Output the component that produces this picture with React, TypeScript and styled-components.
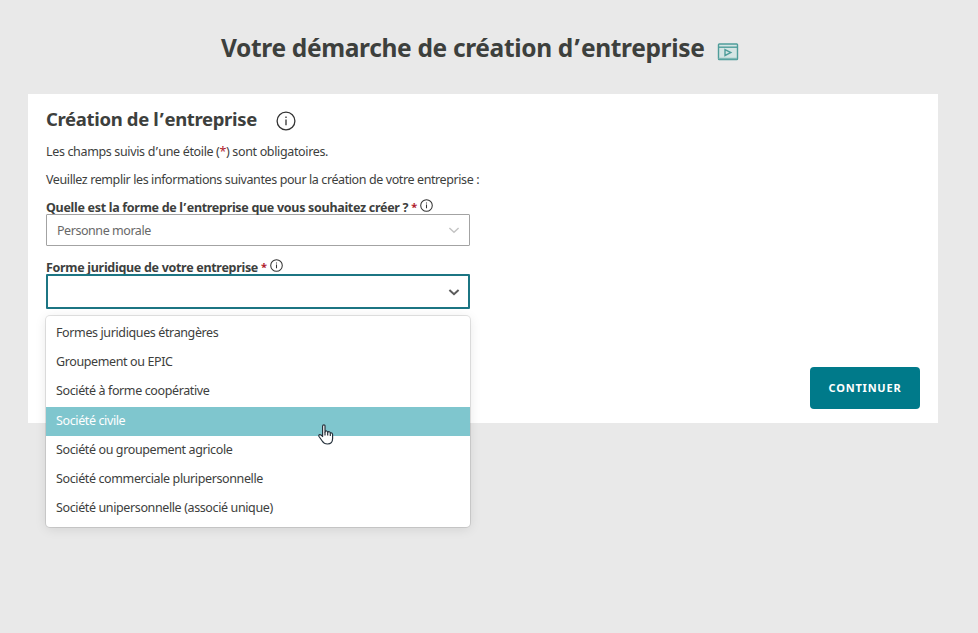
import React from "react";
import styled, { createGlobalStyle, css } from "styled-components";

const GlobalStyle = createGlobalStyle`
  * { box-sizing: border-box; }
  body {
    margin: 0;
    background: #e9e9e9;
    color: #3d403d;
    font-family: "Noto Sans", "Open Sans", sans-serif;
  }
`;

const Page = styled.main`
  display: flex;
  flex-direction: column;
  height: 633px;
  padding: 0 40px 0 28px;
  overflow: hidden;
`;

const PageHeader = styled.header`
  display: flex;
  align-items: center;
  height: 94px;
  padding-left: 193px;
`;

const PageTitle = styled.h1`
  flex: none;
  width: 496px;
  margin: 0;
  padding-top: 2px;
  font-size: 24.5px;
  line-height: 36px;
  font-weight: 700;
  letter-spacing: -0.34px;
  white-space: nowrap;
`;

const Apostrophe = styled.span`
  padding: 0 0.06em;
`;

const Card = styled.section`
  display: flex;
  align-items: flex-end;
  justify-content: space-between;
  height: 329px;
  padding: 0 18px 14px;
  background: #fff;
`;

const Form = styled.div`
  align-self: flex-start;
  width: 424px;
`;

const CardHeader = styled.div`
  display: flex;
  align-items: center;
  height: 44px;
  padding-top: 9px;
`;

const CardTitle = styled.h2`
  flex: none;
  width: 230px;
  margin: 0;
  font-size: 18.5px;
  line-height: 28px;
  padding-bottom: 4px;
  font-weight: 700;
  letter-spacing: -0.34px;
  white-space: nowrap;
`;

const Hint = styled.p<{ $spacing: number }>`
  margin: 0;
  height: 28px;
  font-size: 12.5px;
  line-height: 28px;
  letter-spacing: ${(p) => p.$spacing}px;
  white-space: nowrap;
`;

const Required = styled.span`
  color: #b0202c;
`;

const Label = styled.label<{ $gap?: number }>`
  display: flex;
  align-items: center;
  height: 20px;
  margin-top: ${(p) => p.$gap ?? 0}px;
  font-size: 12.5px;
  line-height: 20px;
  font-weight: 700;
  letter-spacing: -0.3px;
  white-space: nowrap;
  gap: 3px;

  svg {
    margin-top: 2px;
  }

  span {
    padding-top: 8px;
  }

  span span {
    padding-top: 0;
  }

  ${Required} {
    padding-top: 6px;
    font-size: 11px;
  }
`;

const SelectBox = styled.div<{ $active?: boolean }>`
  display: flex;
  align-items: center;
  justify-content: space-between;
  height: 32px;
  padding: 0 9px 0 10px;
  border: 1px solid #a3a3a3;
  border-radius: 1px;
  background: #fff;
  color: #686868;
  font-size: 12.5px;
  letter-spacing: -0.45px;
  ${(p) =>
    p.$active &&
    css`
      height: 35px;
      padding-right: 8px;
      border: 2px solid #1c7583;
      justify-content: flex-end;
    `}
`;

const Field = styled.div`
  position: relative;
`;

const Menu = styled.ul`
  position: absolute;
  top: 42px;
  left: 0;
  width: 424px;
  height: 211px;
  margin: 0;
  padding: 3px 0 0;
  list-style: none;
  background: #fff;
  border-radius: 4px;
  box-shadow: 0 0 0 1px rgba(0, 0, 0, 0.1), 0 2px 12px rgba(0, 0, 0, 0.1);
`;

const Option = styled.li<{ $hover?: boolean }>`
  height: 29.2px;
  padding-left: 10px;
  font-size: 12.5px;
  line-height: 28px;
  letter-spacing: -0.38px;
  white-space: nowrap;
  ${(p) => p.$hover && css`background: #7fc6ce; color: #fff;`}
`;

const Pointer = styled.svg`
  position: absolute;
  left: 272px;
  top: 150px;
`;

const Submit = styled.button`
  width: 110px;
  height: 42px;
  padding: 0;
  border: 0;
  border-radius: 4px;
  background: #007a8a;
  color: #fff;
  font: 700 11px/16px "Noto Sans", sans-serif;
  letter-spacing: 0.8px;
`;

const Info = ({ size }: { size: number }) => (
  <svg width={size} height={size} viewBox="0 0 20 20" fill="none" stroke="#333" strokeWidth={size > 15 ? 1.3 : 1.6}>
    <circle cx="10" cy="10" r="8.9" />
    <path d="M10 8.6V14.2M10 5.4V7" />
  </svg>
);

const VideoSvg = styled.svg`
  flex: none;
  margin-top: 9px;
`;

const VideoIcon = () => (
  <VideoSvg width="22" height="18" viewBox="0 0 22 18" fill="none" stroke="#4f9d9a" strokeWidth="1.4">
    <rect x="1.5" y="1" width="19" height="15.5" rx="0.8" fill="#d5e5e4" />
    <path d="M1.5 4.2H20.5" />
    <path d="M1.5 15.5H20" stroke="#7fb8b5" />
    <path d="M8 6.7L13.8 9.6L8 12.5Z" />
  </VideoSvg>
);

const Chevron = ({ color, width }: { color: string; width: number }) => (
  <svg width="12" height="8" viewBox="0 0 12 8" fill="none" stroke={color} strokeWidth={width}>
    <path d="M1.4 2L6 6.2L10.6 2" />
  </svg>
);

const options = [
  "Formes juridiques étrangères",
  "Groupement ou EPIC",
  "Société à forme coopérative",
  "Société civile",
  "Société ou groupement agricole",
  "Société commerciale pluripersonnelle",
  "Société unipersonnelle (associé unique)",
];

export default function App() {
  return (
    <Page>
      <GlobalStyle />
      <PageHeader>
        <PageTitle>Votre démarche de création d<Apostrophe>’</Apostrophe>entreprise</PageTitle>
        <VideoIcon />
      </PageHeader>
      <Card>
        <Form>
          <CardHeader>
            <CardTitle>Création de l<Apostrophe>’</Apostrophe>entreprise</CardTitle>
            <Info size={20} />
          </CardHeader>
          <Hint $spacing={-0.35}>
            Les champs suivis d<Apostrophe>’</Apostrophe>une étoile (<Required>*</Required>) sont obligatoires.
          </Hint>
          <Hint $spacing={-0.4}>Veuillez remplir les informations suivantes pour la création de votre entreprise :</Hint>
          <Label>
            <span>Quelle est la forme de l<Apostrophe>’</Apostrophe>entreprise que vous souhaitez créer ?</span>
            <Required>*</Required>
            <Info size={13} />
          </Label>
          <SelectBox>
            Personne morale
            <Chevron color="#c4c4c4" width={1.5} />
          </SelectBox>
          <Label $gap={8}>
            <span>Forme juridique de votre entreprise</span>
            <Required>*</Required>
            <Info size={13} />
          </Label>
          <Field>
            <SelectBox $active>
              <Chevron color="#5c5c5c" width={2} />
            </SelectBox>
            <Menu>
              {options.map((label, i) => (
                <Option key={label} $hover={i === 3}>{label}</Option>
              ))}
            </Menu>
            <Pointer width="16" height="21" viewBox="0 0 16 21" fill="#fff" stroke="#26323c" strokeWidth="1.2" strokeLinejoin="round">
              <path d="M4.6 12.5V2.2Q4.6.8 5.8.8T7 2.2V8Q7.5 6.8 8.6 7T9.7 8.5Q10.3 7.4 11.3 7.8T12.3 9.2Q14.6 8.2 14.6 11V14.5Q14.6 20 9.5 20Q6 20 4.2 17L1 12.5Q.4 11 1.6 10.6T4.6 12.5Z" />
              <path d="M7 8V11.5M9.7 8.5V11.5M12.3 9.2V12" />
            </Pointer>
          </Field>
        </Form>
        <Submit>CONTINUER</Submit>
      </Card>
    </Page>
  );
}
